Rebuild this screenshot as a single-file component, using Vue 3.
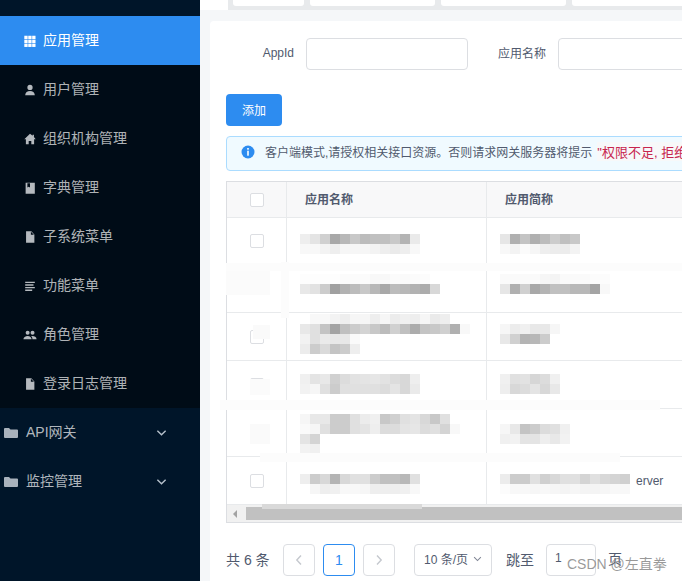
<script setup>
// 侧边菜单
const subItems = [
  { label: "用户管理", icon: "person" },
  { label: "组织机构管理", icon: "home" },
  { label: "字典管理", icon: "book" },
  { label: "子系统菜单", icon: "doc" },
  { label: "功能菜单", icon: "list" },
  { label: "角色管理", icon: "people" },
  { label: "登录日志管理", icon: "doc" },
];

const groups = ["API网关", "监控管理"];

const iconPaths = {
  person: "M8 8a3 3 0 1 0 0-6 3 3 0 0 0 0 6zM2.5 14c0-3 2.500-4.800 5.500-4.800s5.500 1.800 5.500 4.800z",
  home: "M8 2 1.500 8.200h1.800V14h3.200v-3.800h3V14h3.200V8.200h1.800L12.500 5.600V3h-1.500v1.200z",
  book: "M3 2h10.500v12.500H3zM5 2.500v5l1.500-1 1.500 1v-5z",
  doc: "M3.500 1.500h6l3.500 3.500v9.500H3.500zM9 2v3.500h3.500z",
  list: "M2.500 3h11v1.600h-11zM2.500 6h9.500v1.600H2.500zM2.500 9h11v1.600h-11zM2.500 12h8v1.600h-8z",
  people: "M5.300 7.800a2.300 2.300 0 1 0 0-4.600 2.300 2.300 0 0 0 0 4.600zM10.900 7.800a2.300 2.300 0 1 0 0-4.600 2.300 2.300 0 0 0 0 4.600zM.5 12.800c0-2.300 2.200-3.800 4.800-3.800 2.500 0 4.500 1.500 4.500 3.800zM10.800 12.800c0-1.500-.5-2.700-1.500-3.600 2.800-.6 6.200.7 6.200 3.600z",
};

// 打码区域：每行一组灰度，每格 10px
const rows = [
  {
    top: 16,
    check: true,
    name: { top: 0, lines: ["eee4d0a8b8c8bcc0c0c8b4ea", "f8f8f3eef6f6f6f3eeeaeef8"] },
    short: { top: 0, lines: ["e6b0c4b0bcccc0c8", "f8f3fbf6eeececf3"] },
  },
  {
    top: 9,
    check: false,
    name: { top: 0, lines: ["fdfdfdfdfbfbfbf8f8fbfafbfc", "e8e2cca0b2bcc8b8a8bcb8b2acd8"] },
    short: { top: 0, lines: ["fafafafaf6f4fafafafcfc", "e6b0d0a8b4c0c0b8b8a4f8"] },
  },
  {
    top: 1,
    check: true,
    name: {
      top: 0,
      lines: ["fff8f8f3eef6f6eef6ecf0eef6eaee", "e8e0c4a4c0ccd4c8bcd0c0acc4c8d0b0f8", "f2e0eae8e8fa", "ecccdac4ccee"],
    },
    short: { top: 10, lines: ["f6ecf0e8e8f6", "e8d0b4b8cc"] },
  },
  {
    top: 13,
    check: true,
    name: { top: 0, lines: ["f0e4e8d0dce2e4e6e2dcd8ee", "f2f6e0cce0e0e0e0dce4d8ea"] },
    short: { top: 0, lines: ["f0e0e2d6dcf0", "eed8dce4d8e8"] },
  },
  {
    top: 5,
    check: false,
    name: { top: 0, lines: ["f6e8e8cccce0ecf0c8d0e0e4d8c8e0", "faf6e0cccce0e4eedcdce4e6dce0d4f8", "e4d4", "f2f0"] },
    short: { top: 10, lines: ["f6e8c4ccdce0f0", "f0f2e4e4eee8f2"] },
  },
  {
    top: 17,
    check: true,
    name: { top: 0, lines: ["eeccd8b4d8e0e0ccc0c0b8e0", "fff6eef0f8f8f6eeeeeef0f8"] },
    short: { top: 0, lines: ["eccccce0d0d8e0e0d4e0d8d4d0", "fcf8f8f6f8f6f4f6f4f4f6f8f8"], tail: "erver" },
  },
];

function cells(line) {
  const out = [];
  for (let i = 0; i < line.length; i += 2) {
    const v = line.slice(i, i + 2);
    out.push(`#${v}${v}${v}`);
  }
  return out;
}

// 截图上的涂抹痕迹
const smears = [
  { x: 226, y: 263, w: 456, h: 8, c: "#fcfcfc" },
  { x: 226, y: 271, w: 44, h: 24, c: "#fbfbfb" },
  { x: 281, y: 262, w: 8, h: 56, c: "#fcfcfc" },
  { x: 253, y: 325, w: 17, h: 14, c: "#fafafa" },
  { x: 250, y: 379, w: 20, h: 16, c: "#fbfbfb" },
  { x: 220, y: 400, w: 440, h: 10, c: "#fcfcfc" },
  { x: 250, y: 424, w: 20, h: 20, c: "#fafafa" },
  { x: 260, y: 453, w: 360, h: 9, c: "#fcfcfc" },
  { x: 262, y: 504, w: 160, h: 5, c: "#d9d9d9" },
];
</script>

<template>
  <div class="page">
    <!-- 侧边栏 -->
    <aside class="sider">
      <div class="menu-active">
        <svg class="icon" viewBox="0 0 16 16" fill="#fff">
          <rect v-for="n in 9" :key="n" :x="1.500 + ((n - 1) % 3) * 4.500" :y="2 + Math.floor((n - 1) / 3) * 4.500" width="3.800" height="3.800" />
        </svg>
        <span class="menu-text">应用管理</span>
      </div>
      <div class="submenu">
        <div v-for="item in subItems" :key="item.label" class="menu-item">
          <svg class="icon" viewBox="0 0 16 16" fill="#b5babf">
            <path fill-rule="evenodd" :d="iconPaths[item.icon]" />
          </svg>
          <span class="menu-text">{{ item.label }}</span>
        </div>
      </div>
      <div v-for="group in groups" :key="group" class="menu-group">
        <svg class="folder" viewBox="0 0 14 12" fill="#a9b2bc">
          <path d="M0 2q0-1 1-1h4l1.500 1.500H13q1 0 1 1V10q0 1-1 1H1q-1 0-1-1z" />
        </svg>
        <span class="group-label menu-text">{{ group }}</span>
        <svg class="chevron" viewBox="0 0 12 8" fill="none" stroke="#b5c0cb" stroke-width="1.500">
          <path d="M1.500 1.500 6 6l4.500-4.500" />
        </svg>
      </div>
    </aside>

    <main class="content">
      <!-- 顶部标签 -->
      <div class="tabs-wrap">
        <div class="tabs">
          <div class="tab tab-1"></div>
          <div class="tab tab-2"></div>
          <div class="tab tab-2"></div>
          <div class="tab tab-2"></div>
        </div>
      </div>

      <section class="card">
        <!-- 查询表单 -->
        <div class="form">
          <label class="label label-id">AppId</label>
          <div class="input input-id"></div>
          <label class="label label-name">应用名称</label>
          <div class="input input-name"></div>
        </div>

        <button class="add-btn">添加</button>

        <div class="alert">
          <svg class="alert-icon" viewBox="0 0 14 14">
            <circle cx="7" cy="7" r="6.500" fill="#2d8cf0" />
            <rect x="6.200" y="3" width="1.600" height="1.700" fill="#fff" />
            <rect x="6.200" y="5.700" width="1.600" height="5" fill="#fff" />
          </svg>
          <span>客户端模式,请授权相关接口资源。否则请求网关服务器将提示</span>
          <code class="alert-code">"权限不足, 拒绝访问"</code>
        </div>

        <!-- 表格 -->
        <div class="table">
          <div class="tr th">
            <div class="td col-check"><span class="checkbox"></span></div>
            <div class="td col-name">应用名称</div>
            <div class="td col-short">应用简称</div>
          </div>
          <div v-for="(row, i) in rows" :key="i" class="tr body-row">
            <div class="td col-check">
              <span v-if="row.check" class="checkbox"></span>
            </div>
            <div class="td col-name blur-cell" :style="{ paddingTop: row.top + row.name.top + 'px' }">
              <div v-for="(line, l) in row.name.lines" :key="l" class="blur-line">
                <i v-for="(c, k) in cells(line)" :key="k" :style="{ background: c }"></i>
              </div>
            </div>
            <div class="td col-short blur-cell" :style="{ paddingTop: row.top + row.short.top + 'px' }">
              <div v-for="(line, l) in row.short.lines" :key="l" class="blur-line">
                <i v-for="(c, k) in cells(line)" :key="k" :style="{ background: c }"></i>
                <span v-if="row.short.tail && l === 0" class="tail">{{ row.short.tail }}</span>
              </div>
            </div>
          </div>
          <div class="scrollbar">
            <span class="scroll-arrow"></span>
            <div class="scroll-thumb"></div>
          </div>
        </div>

        <!-- 分页 -->
        <div class="pager">
          <span class="total">共 6 条</span>
          <span class="page-btn">
            <svg viewBox="0 0 8 12" fill="none" stroke="#c5c8ce" stroke-width="1.400"><path d="M6 1.500 1.800 6 6 10.500" /></svg>
          </span>
          <span class="page-btn current">1</span>
          <span class="page-btn">
            <svg viewBox="0 0 8 12" fill="none" stroke="#c5c8ce" stroke-width="1.400"><path d="M2 1.500 6.200 6 2 10.500" /></svg>
          </span>
          <span class="size-select">
            10 条/页
            <svg viewBox="0 0 12 8" fill="none" stroke="#808695" stroke-width="1.400"><path d="M1.500 1.500 6 6l4.500-4.500" /></svg>
          </span>
          <span class="jump">跳至</span>
          <span class="jump-input">1</span>
          <span class="jump-unit">页</span>
        </div>
      </section>
    </main>

    <div
      v-for="(s, i) in smears"
      :key="i"
      class="smear"
      :style="{ left: s.x + 'px', top: s.y + 'px', width: s.w + 'px', height: s.h + 'px', background: s.c }"
    ></div>
    <div class="watermark">CSDN @左直拳</div>
  </div>
</template>

<style>
html,
body {
  margin: 0;
  overflow: hidden;
}
</style>

<style scoped>
.page {
  position: relative;
  display: flex;
  width: 682px;
  height: 581px;
  overflow: hidden;
  font-family: "Liberation Sans", "Noto Sans CJK SC", sans-serif;
  font-size: 12px;
  color: #515a6e;
}

/* 侧边栏 */
.sider {
  flex: 0 0 200px;
  box-sizing: border-box;
  padding-top: 16px;
  background: #001529;
  font-size: 14px;
}

.menu-active,
.menu-item {
  display: flex;
  align-items: center;
  height: 49px;
  padding-left: 23px;
  gap: 6px;
}

.menu-active {
  background: #2d8cf0;
  color: #fff;
}

.submenu {
  background: #000c17;
}

.menu-item {
  color: rgba(255, 255, 255, 0.7);
}

.menu-text {
  padding-bottom: 4px;
}

.icon {
  width: 14px;
  height: 14px;
  flex: none;
}

.menu-group {
  display: flex;
  align-items: center;
  height: 49px;
  padding-left: 4px;
  color: rgba(255, 255, 255, 0.7);
}

.folder {
  width: 14px;
  height: 12px;
  margin-right: 8px;
}

.group-label {
  flex: 1;
}

.chevron {
  width: 11px;
  height: 8px;
  margin-right: 33px;
}

/* 内容区 */
.content {
  flex: 1;
  min-width: 0;
  background: #f5f7f9;
}

.tabs-wrap {
  height: 10px;
  background: #fff;
  padding-left: 28px;
}

.tabs {
  display: flex;
  gap: 6px;
  height: 10px;
  padding-left: 5px;
  background: #e8eaec;
}

.tab {
  flex: none;
  height: 6px;
  background: #fff;
  border-radius: 0 0 3px 3px;
}

.tab-1 {
  width: 71px;
}

.tab-2 {
  width: 125px;
}

.card {
  width: 700px;
  height: 570px;
  box-sizing: border-box;
  margin: 11px 0 0 10px;
  padding: 17px 16px 0;
  background: #fff;
  border-radius: 4px;
}

.form {
  display: flex;
  align-items: center;
  height: 32px;
}

.label {
  flex: none;
  padding-bottom: 3px;
  text-align: right;
}

.label-id {
  width: 68px;
  margin-right: 12px;
}

.label-name {
  margin: 0 12px 0 30px;
}

.input {
  box-sizing: border-box;
  flex: none;
  height: 32px;
  border: 1px solid #dcdee2;
  border-radius: 4px;
}

.input-id {
  width: 162px;
}

.input-name {
  width: 162px;
}

.add-btn {
  display: block;
  box-sizing: border-box;
  width: 56px;
  height: 32px;
  margin-top: 24px;
  padding: 0 0 2px;
  border: none;
  border-radius: 4px;
  background: #2d8cf0;
  color: #fff;
  font: inherit;
}

.alert {
  display: flex;
  align-items: center;
  box-sizing: border-box;
  width: 680px;
  height: 35px;
  margin-top: 10px;
  padding: 0 0 4px 14px;
  border: 1px solid #abdcff;
  border-radius: 4px;
  background: #f0faff;
  white-space: nowrap;
}

.alert-icon {
  flex: none;
  width: 14px;
  height: 14px;
  margin: 0 10px 0 0;
}

.alert-code {
  margin-left: 5px;
  background: #f7f8f9;
  color: #c7254e;
  font-family: inherit;
  font-size: 13px;
}

/* 表格 */
.table {
  box-sizing: border-box;
  width: 680px;
  margin-top: 10px;
  border: 1px solid #dcdee2;
  border-right: none;
}

.tr {
  display: flex;
  box-sizing: border-box;
  border-bottom: 1px solid #e8eaec;
}

.th {
  height: 36px;
  background: #f8f8f9;
  font-weight: 700;
}

.body-row {
  height: 48px;
}

.th + .body-row {
  height: 47px;
}

.td {
  box-sizing: border-box;
  flex: none;
}

.col-check {
  display: flex;
  align-items: center;
  justify-content: center;
  width: 60px;
  border-right: 1px solid #e8eaec;
}

.col-name,
.col-short {
  padding-left: 18px;
  line-height: 36px;
}

.col-name {
  width: 200px;
  border-right: 1px solid #e8eaec;
}

.col-short {
  width: 300px;
}

.blur-cell {
  padding-left: 13px;
  line-height: 10px;
}

.blur-line {
  display: flex;
  height: 10px;
}

.blur-line i {
  flex: none;
  width: 10px;
  height: 10px;
}

.tail {
  height: 14px;
  margin-left: 6px;
  line-height: 14px;
}

.checkbox {
  box-sizing: border-box;
  display: block;
  width: 14px;
  height: 14px;
  border: 1px solid #dcdee2;
  border-radius: 2px;
  background: #fff;
}

.scrollbar {
  display: flex;
  align-items: center;
  height: 17px;
  background: #f1f1f1;
}

.scroll-arrow {
  flex: none;
  width: 0;
  height: 0;
  margin: 0 9px 0 6px;
  border: 4px solid transparent;
  border-left: 0;
  border-right: 4px solid #a3a3a3;
}

.scroll-thumb {
  flex: 1;
  height: 13px;
  background: #c1c1c1;
}

/* 分页 */
.pager {
  display: flex;
  align-items: center;
  height: 32px;
  margin-top: 21px;
  font-size: 14px;
  white-space: nowrap;
}

.total {
  width: 57px;
  flex: none;
  padding-bottom: 3px;
}

.page-btn {
  box-sizing: border-box;
  display: flex;
  align-items: center;
  justify-content: center;
  flex: none;
  width: 32px;
  height: 32px;
  margin-right: 8px;
  border: 1px solid #dcdee2;
  border-radius: 4px;
}

.page-btn svg {
  width: 8px;
  height: 12px;
}

.page-btn.current {
  border-color: #2d8cf0;
  color: #2d8cf0;
}

.size-select {
  box-sizing: border-box;
  display: flex;
  align-items: center;
  gap: 5px;
  flex: none;
  width: 78px;
  height: 32px;
  margin-left: 11px;
  padding: 0 0 3px 9px;
  border: 1px solid #dcdee2;
  border-radius: 4px;
  font-size: 12px;
}

.size-select svg {
  width: 9px;
  height: 6px;
}

.jump {
  margin: 0 12px 0 14px;
  padding-bottom: 3px;
}

.jump-input {
  box-sizing: border-box;
  flex: none;
  width: 50px;
  height: 32px;
  padding-left: 8px;
  border: 1px solid #dcdee2;
  border-radius: 4px;
  font-size: 12px;
  line-height: 26px;
}

.jump-unit {
  margin-left: 12px;
  padding-bottom: 5px;
}

.smear {
  position: absolute;
}

.watermark {
  position: absolute;
  left: 567px;
  top: 553px;
  color: rgba(120, 120, 120, 0.75);
  font-size: 14px;
}
</style>
